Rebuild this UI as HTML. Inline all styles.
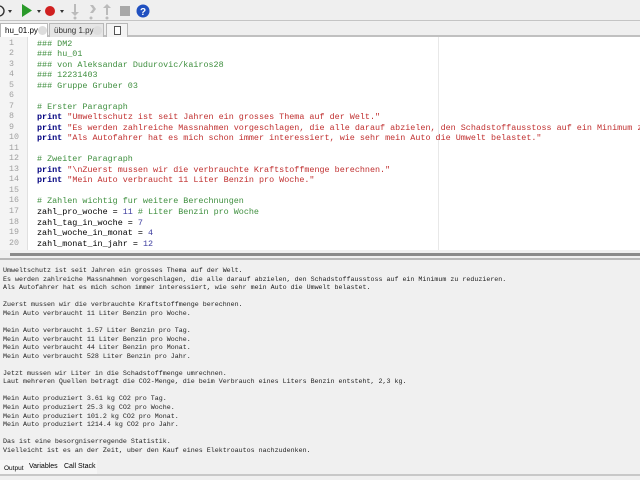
<!DOCTYPE html>
<html><head><style>
*{margin:0;padding:0;box-sizing:border-box}
body{width:640px;height:480px;overflow:hidden;background:#f0f0f0;font-family:"Liberation Sans",sans-serif;position:relative}
.tb{position:absolute;left:0;top:0;width:640px;height:21px;background:#efefef;border-bottom:1px solid #c4c4c4}
.tabs{position:absolute;left:0;top:22px;width:640px;height:15px;background:#efefef;border-bottom:2px solid #c0c0c0}
.tab{position:absolute;top:1px;height:14px;font-size:8px;line-height:13px;padding-left:4px;border:1px solid #b8b8b8;border-bottom:none}
.ed{position:absolute;left:0;top:37px;width:640px;height:213px;background:#fff;overflow:hidden}
.gut{position:absolute;left:0;top:0;width:28px;height:213px;background:#f4f4f4;border-right:1px solid #e0e0e0}
.mar{position:absolute;left:438px;top:0;width:1px;height:213px;background:#e8e8e8}
.ln{position:absolute;left:9px;font:8.3px/10.53px "Liberation Mono",monospace;color:#a0a0a0;white-space:pre}
.code{position:absolute;left:37px;top:1.5px;font:8.42px/10.53px "Liberation Mono",monospace;color:#000;white-space:pre}
.c{color:#3f8f3f}.k{color:#00007f;font-weight:bold}.s{color:#c03030}.n{color:#4040a0}
.split{position:absolute;left:0;top:250px;width:640px;height:12px;background:#f0f0f0}
.out{position:absolute;left:3px;top:266px;font:6.66px/8.57px "Liberation Mono",monospace;color:#222;white-space:pre}
.bt{position:absolute;top:463px;font-size:7px;color:#000}
</style></head><body>
<div class="tb">
<svg width="160" height="21" style="position:absolute;left:0;top:0">
<circle cx="-1" cy="11" r="5" fill="none" stroke="#333" stroke-width="1.4"/>
<path d="M8 10h4l-2 3z" fill="#333"/>
<path d="M22 4v13l10-6.5z" fill="#2a9a2a"/>
<path d="M37 10h4l-2 3z" fill="#333"/>
<circle cx="50" cy="11" r="5" fill="#d02020"/>
<path d="M60 10h4l-2 3z" fill="#333"/>
<g fill="#bbb"><path d="M74 4h2v8h3l-4 4-4-4h3z"/><circle cx="75" cy="18" r="1.5"/>
<path d="M90 5h3l3 4-3 4h-3l3-4z"/><circle cx="91" cy="18" r="1.5"/>
<path d="M107 4l4 4h-3v7h-2v-7h-3z"/><circle cx="107" cy="18" r="1.5"/></g>
<rect x="120" y="6" width="10" height="10" fill="#a8a8a8"/>
<circle cx="143" cy="11" r="6.5" fill="#2050c0"/>
<text x="143" y="15" font-size="10" font-weight="bold" fill="#fff" text-anchor="middle" font-family="Liberation Sans">?</text>
</svg>
</div>
<div class="tabs">
<div class="tab" style="left:0;width:48px;background:#fff">hu_01.py<span style="position:absolute;left:37px;top:2px;width:9px;height:9px;border-radius:50%;background:#ddd"></span></div>
<div class="tab" style="left:49px;width:55px;background:#e6e6e6;color:#333">übung 1.py<span style="position:absolute;left:43px;top:2px;width:9px;height:9px;border-radius:50%;background:#ddd"></span></div>
<div class="tab" style="left:106px;width:22px;background:#f4f4f4"><span style="position:absolute;left:7px;top:2px;width:7px;height:9px;border:1px solid #555;background:#fff"></span></div>
</div>
<div class="ed">
<div class="gut"></div><div class="mar"></div>
<div class="ln" style="top:1.5px">1
2
3
4
5
6
7
8
9
10
11
12
13
14
15
16
17
18
19
20</div>
<div class="code"><span class="c">### DM2
### hu_01
### von Aleksandar Dudurovic/kairos28
### 12231403
### Gruppe Gruber 03</span>

<span class="c"># Erster Paragraph</span>
<span class="k">print</span> <span class="s">"Umweltschutz ist seit Jahren ein grosses Thema auf der Welt."</span>
<span class="k">print</span> <span class="s">"Es werden zahlreiche Massnahmen vorgeschlagen, die alle darauf abzielen, den Schadstoffausstoss auf ein Minimum zu reduzieren."</span>
<span class="k">print</span> <span class="s">"Als Autofahrer hat es mich schon immer interessiert, wie sehr mein Auto die Umwelt belastet."</span>

<span class="c"># Zweiter Paragraph</span>
<span class="k">print</span> <span class="s">"\nZuerst mussen wir die verbrauchte Kraftstoffmenge berechnen."</span>
<span class="k">print</span> <span class="s">"Mein Auto verbraucht 11 Liter Benzin pro Woche."</span>

<span class="c"># Zahlen wichtig fur weitere Berechnungen</span>
zahl_pro_woche = <span class="n">11</span> <span class="c"># Liter Benzin pro Woche</span>
zahl_tag_in_woche = <span class="n">7</span>
zahl_woche_in_monat = <span class="n">4</span>
zahl_monat_in_jahr = <span class="n">12</span></div>
</div>
<div class="split">
<div style="position:absolute;left:10px;top:3px;width:630px;height:3px;background:#8a8a8a"></div>
<div style="position:absolute;left:0;top:8px;width:640px;height:2px;background:#b8b8b8"></div>
</div>
<div class="out">Umweltschutz ist seit Jahren ein grosses Thema auf der Welt.
Es werden zahlreiche Massnahmen vorgeschlagen, die alle darauf abzielen, den Schadstoffausstoss auf ein Minimum zu reduzieren.
Als Autofahrer hat es mich schon immer interessiert, wie sehr mein Auto die Umwelt belastet.

Zuerst mussen wir die verbrauchte Kraftstoffmenge berechnen.
Mein Auto verbraucht 11 Liter Benzin pro Woche.

Mein Auto verbraucht 1.57 Liter Benzin pro Tag.
Mein Auto verbraucht 11 Liter Benzin pro Woche.
Mein Auto verbraucht 44 Liter Benzin pro Monat.
Mein Auto verbraucht 528 Liter Benzin pro Jahr.

Jetzt mussen wir Liter in die Schadstoffmenge umrechnen.
Laut mehreren Quellen betragt die CO2-Menge, die beim Verbrauch eines Liters Benzin entsteht, 2,3 kg.

Mein Auto produziert 3.61 kg CO2 pro Tag.
Mein Auto produziert 25.3 kg CO2 pro Woche.
Mein Auto produziert 101.2 kg CO2 pro Monat.
Mein Auto produziert 1214.4 kg CO2 pro Jahr.

Das ist eine besorgniserregende Statistik.
Vielleicht ist es an der Zeit, uber den Kauf eines Elektroautos nachzudenken.</div>
<div style="position:absolute;left:0;top:460px;width:97px;height:14px;background:#f6f6f6"></div>
<div class="bt" style="left:4px;top:465px;font-size:6.5px">Output</div>
<div class="bt" style="left:29px">Variables</div>
<div class="bt" style="left:64px">Call Stack</div>
<div style="position:absolute;left:0;top:474px;width:640px;height:2px;background:#c8c8c8"></div>
</body></html>
